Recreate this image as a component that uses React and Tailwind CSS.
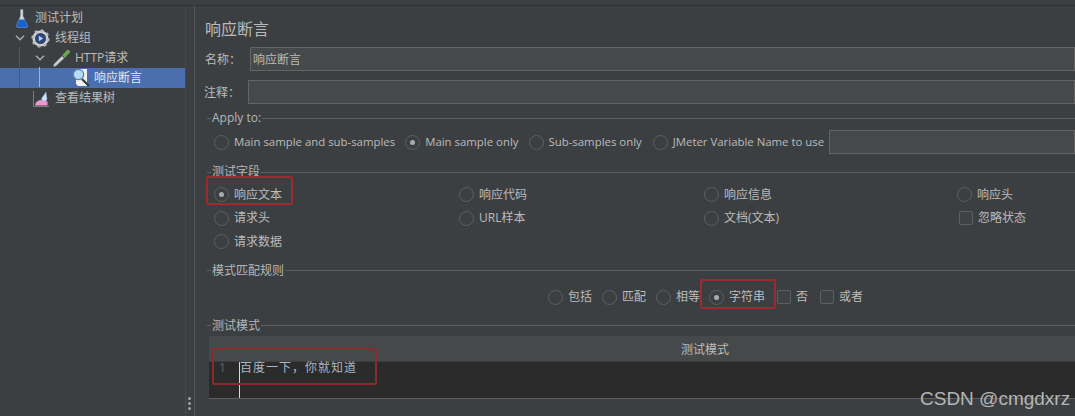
import React from "react"

const font = "[font-family:'Open_Sans','Noto_Sans_CJK_SC',sans-serif]"

function Radio({ label, checked, className = "" }) {
  return (
    <div className={`flex items-center gap-[5px] h-[23px] ${className}`}>
      <span className="w-[15px] h-[15px] rounded-full border border-[#5d6062] bg-[#3c3f41] flex items-center justify-center shrink-0">
        {checked && <span className="w-[5px] h-[5px] rounded-full bg-[#a9abac]" />}
      </span>
      <span className="whitespace-nowrap">{label}</span>
    </div>
  )
}

function Check({ label, className = "" }) {
  return (
    <div className={`flex items-center gap-[5px] h-[23px] ${className}`}>
      <span className="w-[14px] h-[14px] rounded-[2px] border border-[#5d6062] bg-[#3f4244] shrink-0" />
      <span className="whitespace-nowrap">{label}</span>
    </div>
  )
}

function Legend({ children }) {
  return (
    <div className="flex items-center h-[14px] pl-[2px]">
      <span className="w-[4px] h-px bg-[#5d5f61]" />
      <span className="px-px text-[#b4b6b8] leading-[14px] whitespace-nowrap">{children}</span>
      <span className="flex-1 h-px bg-[#5d5f61]" />
    </div>
  )
}

function Flask() {
  return (
    <svg width="12" height="19" viewBox="0 0 12 19">
      <path d="M4.500 .5h2.500v6.500l4.500 9.500a1.500 1.500 0 0 1-1.300 2H1.800a1.500 1.500 0 0 1-1.300-2L4.500 7z" fill="#cfd8e2" stroke="#8a96a3" strokeWidth=".5" />
      <path d="M3 10.500h5.800l2.700 6a1.500 1.500 0 0 1-1.300 2H1.800a1.500 1.500 0 0 1-1.300-2z" fill="#1a62cc" />
    </svg>
  )
}

function Gear() {
  return (
    <svg width="19" height="19" viewBox="0 0 19 19">
      <circle cx="9.500" cy="9.500" r="6.800" fill="none" stroke="#cfd1d3" strokeWidth="2.600" />
      <circle cx="9.500" cy="9.500" r="7.900" fill="none" stroke="#b4b6b8" strokeWidth="2.600" strokeDasharray="2.800 3.400" />
      <circle cx="9.500" cy="9.500" r="5" fill="#28467e" />
      <path d="M7.800 6.800l4.400 2.700-4.400 2.700z" fill="#b6d0ee" />
    </svg>
  )
}

function Dropper() {
  return (
    <svg width="19" height="19" viewBox="0 0 19 19">
      <path d="M1 18l.8-3L10 6.800l2.400 2.400L4 17.200z" fill="#cdd1d4" stroke="#55595c" strokeWidth=".8" />
      <path d="M10 6l1.500-1 3-3.500a1.800 1.800 0 0 1 3 2.500L14 7.500l-1 1.500z" fill="#6aa84f" />
    </svg>
  )
}

function Lens() {
  return (
    <svg width="19" height="20" viewBox="0 0 19 20">
      <path d="M4 1h11v17H6l-2-2z" fill="#eef0f4" />
      <path d="M10 11l7 7" stroke="#34383b" strokeWidth="2.200" />
      <circle cx="6.500" cy="6.500" r="5.200" fill="#b6dcf5" stroke="#5f7f98" strokeWidth="1.200" />
    </svg>
  )
}

function ResultChart() {
  return (
    <svg width="16" height="17" viewBox="0 0 16 17">
      <path d="M.5 1v15.500H16" stroke="#8a8d90" fill="none" strokeWidth=".8" />
      <path d="M2 15.500c.3-3 2.500-5 5-5.500 2.500 0 5 1 7.500 1.500v4z" fill="#ef97d2" />
      <path d="M8.500 8.500L13 2l1 6.500a2.700 2.700 0 0 1-5.500 0z" fill="#cfe2f5" stroke="#7f9ab5" strokeWidth=".4" />
    </svg>
  )
}

function Chevron() {
  return (
    <svg width="10" height="6" viewBox="0 0 10 6" fill="none" stroke="#a9abad" strokeWidth="1.500" className="shrink-0">
      <path d="M1 .8l4 4 4-4" />
    </svg>
  )
}

function Tree() {
  return (
    <div className="w-[185px] shrink-0 pt-[2px] relative text-[#bbbbbb]">
      <div className="h-[20px] flex items-center pl-[16px] gap-[7px]">
        <Flask />
        <span>测试计划</span>
      </div>
      <div className="h-[20px] flex items-center pl-[15px] gap-[6px]">
        <Chevron />
        <Gear />
        <span className="-ml-[1px]">线程组</span>
      </div>
      <div className="h-[20px] flex items-center pl-[35px] gap-[7px]">
        <Chevron />
        <Dropper />
        <span className="-ml-[3px]">HTTP请求</span>
      </div>
      <div className="h-[20px] flex items-center pl-[72px] gap-[3px] bg-[#4b6eaf] text-[#e8e8e8]">
        <Lens />
        <span>响应断言</span>
      </div>
      <div className="h-[20px] flex items-center pl-[33px] gap-[6px]">
        <ResultChart />
        <span>查看结果树</span>
      </div>
      <span className="absolute left-[19px] top-[41px] w-px h-[40px] bg-[#55585a]" />
      <span className="absolute left-[39px] top-[61px] w-px h-[20px] bg-[#8fb8ea]" />
    </div>
  )
}

function Field({ label, inputClass, value }) {
  return (
    <div className="flex items-center h-[24px]">
      <span className="w-[45px] shrink-0 pt-[2px] text-[#bbbbbb] whitespace-nowrap">{label}</span>
      <div className={`flex-1 h-full bg-[#45494a] border border-[#646464] flex items-center pl-[2px] pt-[2px] text-[#bbbbbb] ${inputClass}`}>{value}</div>
    </div>
  )
}

export default function App() {
  return (
    <div className={`w-[1075px] h-[416px] overflow-hidden bg-[#3c3f41] text-[12px] text-[#bbbbbb] relative ${font}`}>
      <div className="h-[6px] border-b border-[#323232]" />
      <div className="flex h-[410px]">
        <Tree />
        <div className="w-[10px] shrink-0 border-l border-r border-l-[#46494b] border-r-[#55585a] relative">
          <div className="absolute left-[2px] bottom-[6px] flex flex-col gap-[2px]">
            <span className="w-[3px] h-[3px] rounded-full bg-[#a0a2a4]" />
            <span className="w-[3px] h-[3px] rounded-full bg-[#a0a2a4]" />
            <span className="w-[3px] h-[3px] rounded-full bg-[#a0a2a4]" />
          </div>
        </div>
        <div className="flex-1 min-w-0 pl-[10px]">
          <div className="h-[41px] flex items-end pb-[8px] text-[16px] text-[#bbbbbb] leading-[20px]">响应断言</div>
          <Field label="名称：" value="响应断言" inputClass="" />
          <div className="h-[9px]" />
          <div className="-ml-px">
            <Field label="注释：" value="" inputClass="-ml-px" />
          </div>
          <div className="h-[7px]" />

          <Legend>Apply to:</Legend>
          <div className="mt-[5px] flex items-center pl-[9px] text-[11.4px]">
            <Radio label="Main sample and sub-samples" />
            <Radio label="Main sample only" checked className="ml-[10px]" />
            <Radio label="Sub-samples only" className="ml-[10px]" />
            <Radio label="JMeter Variable Name to use" className="ml-[11px]" />
            <div className="ml-[5px] flex-1 h-[24px] bg-[#45494a] border border-[#646464]" />
          </div>

          <div className="mt-[11px]"><Legend>测试字段</Legend></div>
          <div className="mt-[4px] pl-[9px] grid grid-cols-[245px_245px_253px_1fr] auto-rows-[23.500px]">
            <Radio label="响应文本" checked />
            <Radio label="响应代码" />
            <Radio label="响应信息" />
            <Radio label="响应头" />
            <Radio label="请求头" />
            <Radio label="URL样本" />
            <Radio label="文档(文本)" />
            <Check label="忽略状态" className="pl-[2px]" />
            <Radio label="请求数据" />
          </div>

          <div className="mt-[10px]"><Legend>模式匹配规则</Legend></div>
          <div className="mt-[8px] pl-[343px] flex items-center">
            <Radio label="包括" />
            <Radio label="匹配" className="ml-[10px]" />
            <Radio label="相等" className="ml-[10px]" />
            <Radio label="字符串" checked className="ml-[9px]" />
            <Check label="否" className="ml-[12px]" />
            <Check label="或者" className="ml-[12px]" />
          </div>

          <div className="mt-[10px]"><Legend>测试模式</Legend></div>
          <div className="ml-[4px] mt-[3px] w-[992px]">
            <div className="h-[25px] pt-[3px] bg-[#45494a] flex items-center justify-center text-[#bbbbbb]">
              测试模式
            </div>
            <div className="h-[37px] bg-[#2b2b2b] border-b border-[#5d5f61] mt-px flex items-start text-[#a9b7c6]">
              <span className="w-[30px] shrink-0 pl-[10px] leading-[12px] text-[#606366]">1</span>
              <span className="w-px h-full bg-[#d8d8d8]" />
              <span className="leading-[12px] tracking-[1px]">百度一下，你就知道</span>
            </div>
          </div>
        </div>
      </div>

      {/* red annotation boxes */}
      <div className="absolute left-[206px] top-[176px] w-[87px] h-[29px] border-2 border-[#9c2a2e] rounded-[2px]" />
      <div className="absolute left-[700px] top-[279px] w-[76px] h-[30px] border-2 border-[#9c2a2e] rounded-[2px]" />
      <div className="absolute left-[212px] top-[348px] w-[165px] h-[37px] border-2 border-[#8a2a2e] rounded-[2px]" />

      <div className="absolute left-[920px] top-[387px] text-[19px] leading-[24px] text-[#b4b6b6] [font-family:'Liberation_Sans',sans-serif] whitespace-nowrap">
        CSDN @cmgdxrz
      </div>
    </div>
  )
}
